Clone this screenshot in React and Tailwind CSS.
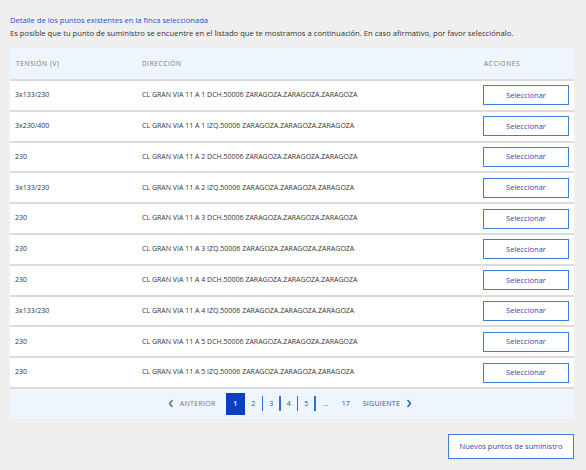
import React from "react";

const rows = [
  ["3x133/230", "CL GRAN VIA 11 A 1 DCH.50006 ZARAGOZA.ZARAGOZA.ZARAGOZA"],
  ["3x230/400", "CL GRAN VIA 11 A 1 IZQ.50006 ZARAGOZA.ZARAGOZA.ZARAGOZA"],
  ["230", "CL GRAN VIA 11 A 2 DCH.50006 ZARAGOZA.ZARAGOZA.ZARAGOZA"],
  ["3x133/230", "CL GRAN VIA 11 A 2 IZQ.50006 ZARAGOZA.ZARAGOZA.ZARAGOZA"],
  ["230", "CL GRAN VIA 11 A 3 DCH.50006 ZARAGOZA.ZARAGOZA.ZARAGOZA"],
  ["230", "CL GRAN VIA 11 A 3 IZQ.50006 ZARAGOZA.ZARAGOZA.ZARAGOZA"],
  ["230", "CL GRAN VIA 11 A 4 DCH.50006 ZARAGOZA.ZARAGOZA.ZARAGOZA"],
  ["3x133/230", "CL GRAN VIA 11 A 4 IZQ.50006 ZARAGOZA.ZARAGOZA.ZARAGOZA"],
  ["230", "CL GRAN VIA 11 A 5 DCH.50006 ZARAGOZA.ZARAGOZA.ZARAGOZA"],
  ["230", "CL GRAN VIA 11 A 5 IZQ.50006 ZARAGOZA.ZARAGOZA.ZARAGOZA"],
];

const Chevron = ({ dir, color }) => (
  <svg width="6" height="9" viewBox="0 0 6 9" fill="none">
    {dir === "left" ? (
      <path d="M4.5 1L1.5 4.5L4.5 8" stroke={color} strokeWidth="1.3" />
    ) : (
      <path d="M1.5 1L4.5 4.5L1.5 8" stroke={color} strokeWidth="1.3" />
    )}
  </svg>
);

export default function App() {
  return (
    <div
      className="w-[586px] h-[470px] bg-[#efefef] overflow-hidden"
      style={{ fontFamily: '"Open Sans", "Noto Sans", sans-serif' }}
    >
      <div className="pt-[14px] px-[10px]">
        <div className="text-[7.6px] leading-[12px] text-[#1a4fd0]">
          Detalle de los puntos existentes en la finca seleccionada
        </div>
        <div className="text-[7.65px] leading-[12px] text-[#333] mt-[1px]">
          Es posible que tu punto de suministro se encuentre en el listado que te mostramos a continuación. En caso afirmativo, por favor selecciónalo.
        </div>
        <div className="mt-[9px] w-[564px]">
          <div className="h-[31px] bg-[#eef5fc] flex items-center text-[6.5px] tracking-[0.6px] text-[#7a7a7a]">
            <div className="w-[132px] pl-[6px]">TENSIÓN (V)</div>
            <div className="flex-1">DIRECCIÓN</div>
            <div className="w-[90px]">ACCIONES</div>
          </div>
          {rows.map((r, i) => (
            <div
              key={i}
              className="h-[30.8px] bg-white border-t-2 border-[#dcdcdc] flex items-center text-[7px] text-[#333]"
            >
              <div className="w-[132px] pl-[5px]">{r[0]}</div>
              <div className="flex-1">{r[1]}</div>
              <div className="w-[91px]">
                <button className="w-[86px] h-[20px] border border-[#3d7ddb] bg-white text-[7.5px] text-[#3b3fa8]">
                  Seleccionar
                </button>
              </div>
            </div>
          ))}
          <div className="h-[32px] bg-[#eef5fc] border-t-2 border-[#dcdcdc] flex items-center justify-center text-[7px]">
            <div className="flex items-center ml-[-4px]">
              <Chevron dir="left" color="#666" />
              <span className="ml-[6px] text-[#777] tracking-[0.3px]">ANTERIOR</span>
              <div className="ml-[10px] w-[19px] h-[22px] bg-[#0b3fbf] text-white flex items-center justify-center font-semibold">1</div>
              <div className="w-[17px] text-center text-[#1d50c8]">2</div>
              <div className="w-[1.5px] h-[15px] bg-[#2a6fd6]" />
              <div className="w-[16px] text-center text-[#1d50c8]">3</div>
              <div className="w-[1.5px] h-[15px] bg-[#2a6fd6]" />
              <div className="w-[16px] text-center text-[#1d50c8]">4</div>
              <div className="w-[1.5px] h-[15px] bg-[#2a6fd6]" />
              <div className="w-[16px] text-center text-[#1d50c8]">5</div>
              <div className="w-[1.5px] h-[15px] bg-[#2a6fd6]" />
              <div className="w-[20px] text-center text-[#777]">...</div>
              <div className="w-[20px] text-center text-[#1d50c8]">17</div>
              <span className="ml-[7px] text-[#1d50c8] tracking-[0.3px]">SIGUIENTE</span>
              <span className="ml-[6px]"><Chevron dir="right" color="#1d50c8" /></span>
            </div>
          </div>
        </div>
        <div className="flex justify-end w-[564px] mt-[15px]">
          <button className="w-[126px] h-[25px] border border-[#3d7ddb] bg-white text-[7.5px] text-[#3b3fa8]">
            Nuevos puntos de suministro
          </button>
        </div>
      </div>
    </div>
  );
}
